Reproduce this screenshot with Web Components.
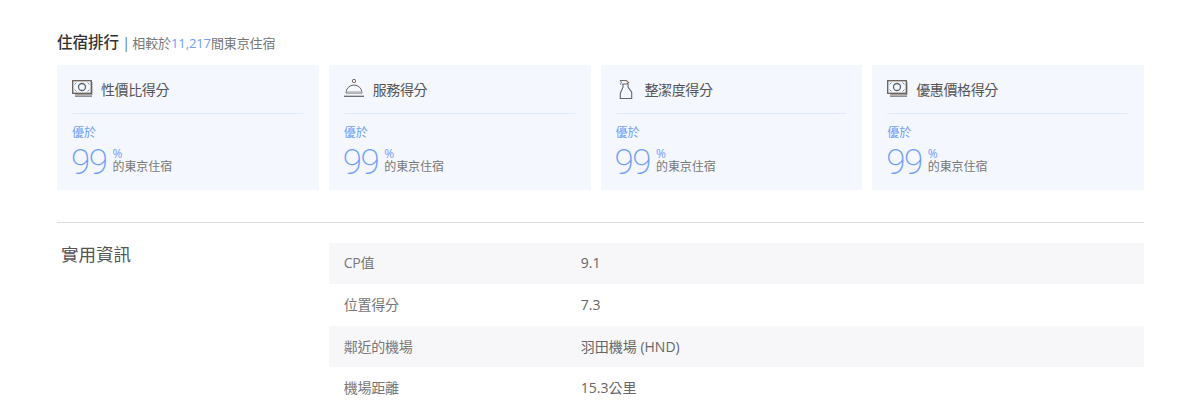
<!DOCTYPE html>
<html lang="zh-Hant">
<head>
<meta charset="utf-8">
<title>住宿排行</title>
<style>
  html, body { margin: 0; background: #fff; }
  body { font-family: "Open Sans", "Noto Sans CJK TC", sans-serif; color: #4a4a4a; height: 418px; overflow: hidden; }
  main { display: block; margin: 0 56px 0 57px; }
</style>
</head>
<body>
<template id="money-icon">
  <svg width="21" height="18" viewBox="0 0 21 18" fill="none">
    <path d="M3 13.500h17v3.500h-17z" fill="#8f8f8f"/>
    <path d="M19 2h1.500v13h-1.500z" fill="#8f8f8f"/>
    <path d="M3 15.200h17" stroke="#d9d9d9" stroke-width=".7"/>
    <rect x=".7" y=".7" width="18.600" height="12.600" fill="#f3f7fe" stroke="#6a5f55" stroke-width="1.300"/>
    <circle cx="10" cy="7" r="3.500" stroke="#5f6368" stroke-width="1.300"/>
    <path d="M2.500 4.500l2-2M2.500 9.500l2 2M17.500 4.500l-2-2M17.500 9.500l-2 2" stroke="#7a8ca8" stroke-width="1"/>
  </svg>
</template>
<template id="bell-icon">
  <svg width="20" height="20" viewBox="0 0 20 20" fill="none">
    <circle cx="10" cy="3" r="1.700" stroke="#7b6a58" stroke-width="1"/>
    <path d="M2 15a8 8 0 0 1 16 0z" fill="#f8f9fd" stroke="#666" stroke-width="1"/>
    <path d="M2.600 13h14.800v1.600h-14.800z" fill="#c6c8cf"/>
    <path d="M0 18.300h20" stroke="#6a6a6a" stroke-width="1.300"/>
  </svg>
</template>
<template id="spray-icon">
  <svg width="14" height="21" viewBox="0 0 14 21" fill="none" stroke-width="1.100">
    <path d="M.8 1.500h6.400l2.500 2.200-2 1.300h-4.500" stroke="#77685a"/>
    <path d="M1.500 1.800l1 2.200M.8 4.500l1.500 1" stroke="#6f85a5"/>
    <path d="M4 5v3.200l-2.700 6v5.300h11.400v-6.200l-3.700-5.200v-3" stroke="#666"/>
  </svg>
</template>

<script>
class RankIcon extends HTMLElement {
  constructor() {
    super();
    this.attachShadow({ mode: "open" });
  }

  connectedCallback() {
    const tpl = document.getElementById(`${this.getAttribute("name")}-icon`);
    this.shadowRoot.innerHTML = "<style>:host { display: block; line-height: 0; }</style>";
    this.shadowRoot.appendChild(tpl.content.cloneNode(true));
  }
}

class RankCard extends HTMLElement {
  constructor() {
    super();
    this.attachShadow({ mode: "open" });
    this.shadowRoot.innerHTML = `
      <style>
        :host {
          display: block;
          box-sizing: border-box;
          height: 125px;
          padding: 12px 16px 0 15px;
          background: #f4f7fe;
        }
        .head {
          display: flex;
          height: 36px;
          border-bottom: 1px solid #e1eafa;
          font-size: 14px;
          line-height: 26px;
          letter-spacing: -0.4px;
          color: #555;
        }
        .icon { flex: none; width: 29px; padding-top: var(--icon-top, 3px); padding-left: var(--icon-left, 0); box-sizing: border-box; }
        .better { margin-top: 12px; font-size: 12px; line-height: 14px; color: #6f9df7; }
        .score { display: flex; align-items: flex-start; }
        .num {
          margin-left: -1px;
          font-family: Roboto, "Open Sans", sans-serif;
          font-size: 35px;
          line-height: 45px;
          font-weight: 200;
          letter-spacing: -1.5px;
          color: #6f9df7;
        }
        .side { margin: 7px 0 0 6px; font-size: 12px; line-height: 13px; letter-spacing: -0.1px; color: #777; }
        .pct { display: block; color: #6f9df7; }
      </style>
      <div class="head"><span class="icon"><slot name="icon"></slot></span><slot></slot></div>
      <div class="better">優於</div>
      <div class="score">
        <span class="num">99</span>
        <span class="side"><span class="pct">%</span>的東京住宿</span>
      </div>
    `;
  }
}

class RankPanel extends HTMLElement {
  constructor() {
    super();
    this.attachShadow({ mode: "open" });
    this.shadowRoot.innerHTML = `
      <style>
        :host { display: block; padding: 30px 0 32px; border-bottom: 1px solid #ddd; }
        h2 { display: flex; align-items: baseline; height: 24px; margin: 0 0 11px; font-size: 15.5px; line-height: 24px; font-weight: 500; color: #333; }
        .note { font-size: 13px; font-weight: 400; letter-spacing: -0.1px; color: #777; }
        .bar { margin: 0 2px 0 3px; font-size: 15px; font-weight: 400; color: #5b7fa8; }
        .grid { display: grid; grid-template-columns: repeat(3, 261.75px) 1fr; gap: 10px; }
      </style>
      <h2><slot name="title"></slot><span class="bar">|</span><span class="note"><slot name="note"></slot></span></h2>
      <div class="grid"><slot></slot></div>
    `;
  }
}

class InfoTable extends HTMLElement {
  constructor() {
    super();
    this.attachShadow({ mode: "open" });
    this.shadowRoot.innerHTML = `
      <style>
        :host { display: grid; grid-template-columns: 271.75px 1fr; padding-top: 19.7px; }
        h3 { margin: 0; padding-left: 4px; font-size: 17.500px; line-height: 23px; font-weight: 400; color: #555; }
      </style>
      <h3><slot name="title"></slot></h3>
      <div><slot></slot></div>
    `;
  }
}

class InfoRow extends HTMLElement {
  constructor() {
    super();
    this.attachShadow({ mode: "open" });
    this.shadowRoot.innerHTML = `
      <style>
        :host { display: flex; box-sizing: border-box; align-items: center; height: 41.6px; padding: 0 0 2px 15px; font-size: 14px; color: #777; }
        :host([shaded]) { background: #f7f7f9; }
        .k { flex: none; width: 237px; letter-spacing: -0.25px; }
        .v { color: #666; }
      </style>
      <span class="k"><slot name="k"></slot></span><span class="v"><slot></slot></span>
    `;
  }
}

customElements.define("rank-icon", RankIcon);
customElements.define("rank-card", RankCard);
customElements.define("rank-panel", RankPanel);
customElements.define("info-table", InfoTable);
customElements.define("info-row", InfoRow);
</script>

<main>
  <rank-panel>
    <span slot="title">住宿排行</span>
    <span slot="note">相較於<span style="color:#6f9df7">11,217</span>間東京住宿</span>
    <rank-card><rank-icon slot="icon" name="money"></rank-icon>性價比得分</rank-card>
    <rank-card style="--icon-top:1px"><rank-icon slot="icon" name="bell"></rank-icon>服務得分</rank-card>
    <rank-card style="--icon-top:2px;--icon-left:3px"><rank-icon slot="icon" name="spray"></rank-icon>整潔度得分</rank-card>
    <rank-card><rank-icon slot="icon" name="money"></rank-icon>優惠價格得分</rank-card>
  </rank-panel>
  <info-table>
    <span slot="title">實用資訊</span>
    <info-row shaded><span slot="k">CP值</span>9.1</info-row>
    <info-row><span slot="k">位置得分</span>7.3</info-row>
    <info-row shaded><span slot="k">鄰近的機場</span>羽田機場 (HND)</info-row>
    <info-row><span slot="k">機場距離</span>15.3公里</info-row>
  </info-table>
</main>
</body>
</html>
